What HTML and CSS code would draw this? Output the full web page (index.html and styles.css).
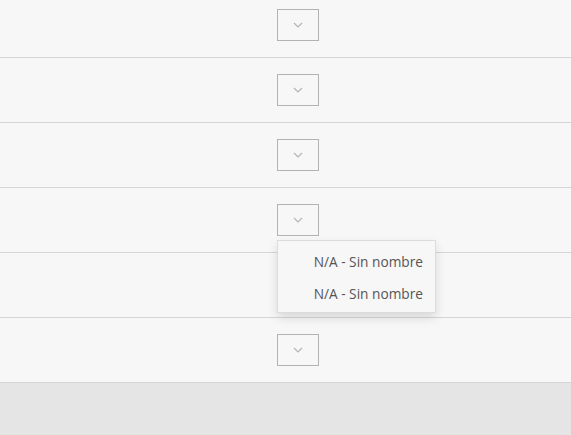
FILE: index.html
```html
<!DOCTYPE html>
<html>
<head>
<meta charset="utf-8">
<link rel="stylesheet" href="styles.css">
</head>
<body>
<div class="list">
  <div class="row first"><button class="toggle"><svg width="10" height="6" viewBox="0 0 10 6"><path d="M1 1 L5 5 L9 1" fill="none" stroke="#b5b5b5" stroke-width="1.2"/></svg></button></div>
  <div class="row"><button class="toggle"><svg width="10" height="6" viewBox="0 0 10 6"><path d="M1 1 L5 5 L9 1" fill="none" stroke="#b5b5b5" stroke-width="1.2"/></svg></button></div>
  <div class="row"><button class="toggle"><svg width="10" height="6" viewBox="0 0 10 6"><path d="M1 1 L5 5 L9 1" fill="none" stroke="#b5b5b5" stroke-width="1.2"/></svg></button></div>
  <div class="row"><div class="cell"><button class="toggle"><svg width="10" height="6" viewBox="0 0 10 6"><path d="M1 1 L5 5 L9 1" fill="none" stroke="#b5b5b5" stroke-width="1.2"/></svg></button>
    <ul class="menu">
      <li>N/A - Sin nombre</li>
      <li>N/A - Sin nombre</li>
    </ul></div>
  </div>
  <div class="row"></div>
  <div class="row"><button class="toggle"><svg width="10" height="6" viewBox="0 0 10 6"><path d="M1 1 L5 5 L9 1" fill="none" stroke="#b5b5b5" stroke-width="1.2"/></svg></button></div>
</div>
</body>
</html>
```
FILE: styles.css
```css
html, body {
  margin: 0;
  padding: 0;
  background: #e5e5e5;
  font-family: "Open Sans", "Noto Sans", sans-serif;
  overflow: hidden;
}
.list {
  margin-top: -7px;
  background: #f7f7f7;
}
.row {
  height: 64px;
  border-bottom: 1px solid #d6d6d6;
  display: flex;
  align-items: center;
  padding-left: 277px;
  box-sizing: content-box;
}
.cell {
  position: relative;
}
.toggle {
  width: 42px;
  height: 32px;
  margin: 0;
  padding: 0;
  border: 1px solid #b3b3b3;
  background: #f7f7f7;
  display: flex;
  align-items: center;
  justify-content: center;
}
.menu {
  position: absolute;
  top: 36px;
  left: 0;
  width: 159px;
  height: 73px;
  margin: 0;
  padding: 5px 0 0;
  list-style: none;
  background: #f7f7f7;
  border: 1px solid #dcdcdc;
  box-shadow: 0 5px 10px rgba(0,0,0,0.12);
  z-index: 2;
  box-sizing: border-box;
}
.menu li {
  height: 32px;
  line-height: 32px;
  font-size: 13.7px;
  color: #555;
  text-align: right;
  padding-right: 12px;
}
```
